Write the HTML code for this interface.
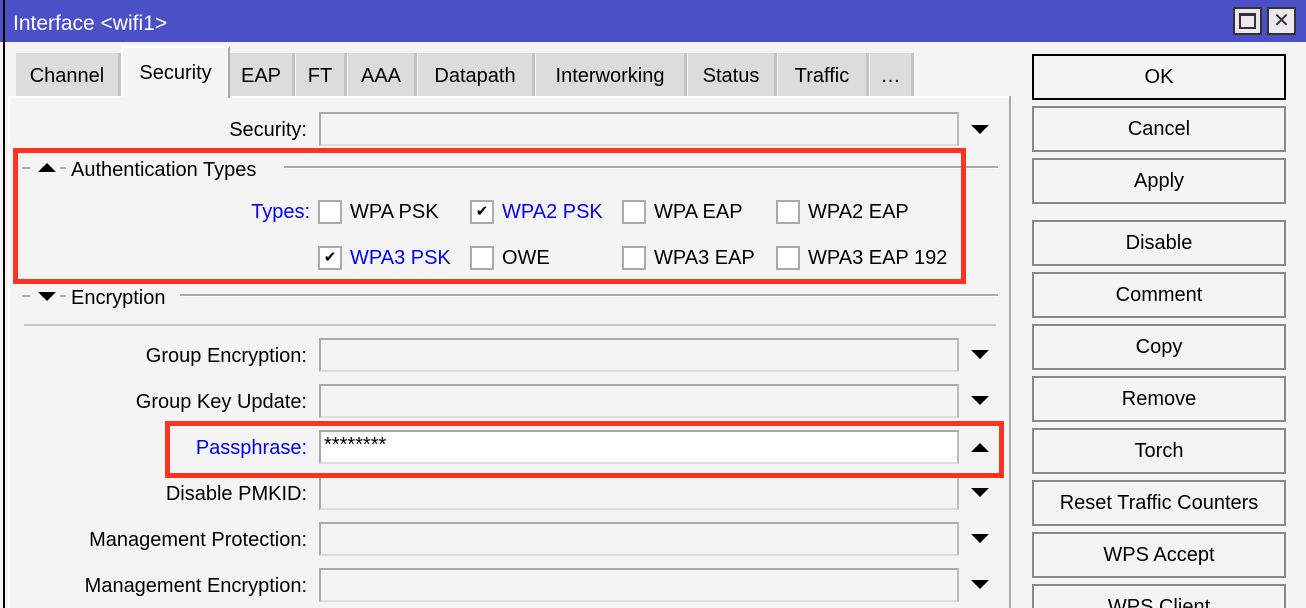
<!DOCTYPE html>
<html style="width:1306px;height:608px;overflow:hidden"><head><style>
*{margin:0;padding:0;box-sizing:border-box}
html,body{width:1306px;height:608px;overflow:hidden}
body{background:#f4f4f4;font-family:"Liberation Sans","DejaVu Sans",sans-serif;font-size:20px;color:#000;position:relative}
.a{position:absolute}
.t{position:absolute;white-space:nowrap;line-height:24px}
.tab{position:absolute;top:53px;height:43px;background:#dcdcdc;border-right:3px solid #c4c4c4;text-align:center;line-height:46px}
.inp{position:absolute;left:319px;width:640px;height:34px;border:2px solid #aaa;border-right-color:#bbb;border-bottom-color:#ddd;background:#f4f4f4}
.lab{position:absolute;right:999px;white-space:nowrap;line-height:24px}
.dn{position:absolute;left:971px;width:0;height:0;border-left:9px solid transparent;border-right:9px solid transparent;border-top:9px solid #000}
.up{position:absolute;left:971px;width:0;height:0;border-left:9px solid transparent;border-right:9px solid transparent;border-bottom:9px solid #000}
.cb{position:absolute;width:24px;height:24px;border:2px solid #aaa;background:#fff}
.ck{font-size:15px;line-height:20px;text-align:center;font-weight:bold}
.btn{position:absolute;left:1032px;width:254px;height:46px;border:2px solid #888;background:#f4f4f4;text-align:center;line-height:42px}
.blue{color:#0000ee}
.red{position:absolute;border:5px solid #ff3322}
</style></head><body>
<div class="a" style="left:0;top:0;width:1306px;height:42px;background:#4b50c6"></div>
<div class="a" style="left:3px;top:0;width:2px;height:608px;background:#000"></div>
<div class="t" style="left:13px;top:12px;color:#fff;font-size:21px">Interface &lt;wifi1&gt;</div>
<div class="a" style="left:1233px;top:7px;width:29px;height:28px;background:#ece8ec;border:2px solid #333"><div class="a" style="left:4px;top:4px;width:17px;height:16px;border:2px solid #333;border-top-width:3px"></div></div>
<div class="a" style="left:1267px;top:7px;width:29px;height:28px;background:#ece8ec;border:2px solid #333;text-align:center;line-height:24px;font-weight:bold;font-size:20px;color:#333">✕</div>

<div class="tab" style="left:16px;width:105px">Channel</div>
<div class="a" style="left:121px;top:46px;width:109px;height:52px;background:#f4f4f4;border-top:2px solid #fff;border-left:2px solid #fff;border-right:2px solid #aaa;text-align:center;line-height:50px">Security</div>
<div class="tab" style="left:230px;width:65px">EAP</div>
<div class="tab" style="left:296px;width:51px">FT</div>
<div class="tab" style="left:348px;width:69px">AAA</div>
<div class="tab" style="left:418px;width:117px">Datapath</div>
<div class="tab" style="left:536px;width:151px">Interworking</div>
<div class="tab" style="left:688px;width:89px">Status</div>
<div class="tab" style="left:778px;width:91px">Traffic</div>
<div class="tab" style="left:870px;width:44px">…</div>
<div class="a" style="left:8px;top:96px;width:113px;height:2px;background:#fff"></div>
<div class="a" style="left:231px;top:96px;width:780px;height:2px;background:#fff"></div>
<div class="a" style="left:8px;top:96px;width:2px;height:512px;background:#fff"></div>
<div class="a" style="left:1009px;top:96px;width:2px;height:512px;background:#aaa"></div>

<div class="lab" style="top:118px">Security:</div>
<div class="inp" style="top:112px"></div><div class="dn" style="top:125px"></div>

<div class="a" style="left:22px;top:167px;width:8px;height:2px;background:#aaa"></div>
<div class="a" style="left:38px;top:163px;border-left:9px solid transparent;border-right:9px solid transparent;border-bottom:9px solid #000"></div>
<div class="a" style="left:60px;top:167px;width:6px;height:2px;background:#aaa"></div>
<div class="t" style="left:71px;top:158px">Authentication Types</div>
<div class="a" style="left:284px;top:166px;width:714px;height:2px;background:#aaa"></div>
<div class="a" style="left:284px;top:168px;width:714px;height:1px;background:#fff"></div>

<div class="t blue" style="right:996px;top:200px">Types:</div>
<div class="cb" style="left:318px;top:200px"></div><div class="t" style="left:350px;top:200px">WPA PSK</div>
<div class="cb ck" style="left:470px;top:200px">✔</div><div class="t blue" style="left:502px;top:200px">WPA2 PSK</div>
<div class="cb" style="left:622px;top:200px"></div><div class="t" style="left:654px;top:200px">WPA EAP</div>
<div class="cb" style="left:776px;top:200px"></div><div class="t" style="left:808px;top:200px">WPA2 EAP</div>
<div class="cb ck" style="left:318px;top:246px">✔</div><div class="t blue" style="left:350px;top:246px">WPA3 PSK</div>
<div class="cb" style="left:470px;top:246px"></div><div class="t" style="left:502px;top:246px">OWE</div>
<div class="cb" style="left:622px;top:246px"></div><div class="t" style="left:654px;top:246px">WPA3 EAP</div>
<div class="cb" style="left:776px;top:246px"></div><div class="t" style="left:808px;top:246px">WPA3 EAP 192</div>
<div class="red" style="left:13px;top:148px;width:953px;height:136px"></div>

<div class="a" style="left:22px;top:295px;width:8px;height:2px;background:#aaa"></div>
<div class="a" style="left:38px;top:292px;border-left:9px solid transparent;border-right:9px solid transparent;border-top:9px solid #000"></div>
<div class="a" style="left:60px;top:295px;width:6px;height:2px;background:#aaa"></div>
<div class="t" style="left:71px;top:286px">Encryption</div>
<div class="a" style="left:180px;top:294px;width:818px;height:2px;background:#aaa"></div>
<div class="a" style="left:180px;top:296px;width:818px;height:1px;background:#fff"></div>
<div class="a" style="left:24px;top:324px;width:972px;height:2px;background:#c4c4c4"></div>

<div class="lab" style="top:344px">Group Encryption:</div><div class="inp" style="top:338px"></div><div class="dn" style="top:350px"></div>
<div class="lab" style="top:390px">Group Key Update:</div><div class="inp" style="top:384px"></div><div class="dn" style="top:396px"></div>
<div class="lab blue" style="top:436px">Passphrase:</div><div class="inp" style="top:430px;background:#fff"></div><div class="t" style="left:324px;top:433px">********</div><div class="up" style="top:443px"></div>
<div class="lab" style="top:482px">Disable PMKID:</div><div class="inp" style="top:476px"></div><div class="dn" style="top:488px"></div>
<div class="lab" style="top:528px">Management Protection:</div><div class="inp" style="top:522px"></div><div class="dn" style="top:534px"></div>
<div class="lab" style="top:574px">Management Encryption:</div><div class="inp" style="top:568px"></div><div class="dn" style="top:580px"></div>
<div class="red" style="left:165px;top:421px;width:839px;height:57px"></div>

<div class="btn" style="top:54px;border:2px solid #000">OK</div>
<div class="btn" style="top:106px">Cancel</div>
<div class="btn" style="top:158px">Apply</div>
<div class="btn" style="top:220px">Disable</div>
<div class="btn" style="top:272px">Comment</div>
<div class="btn" style="top:324px">Copy</div>
<div class="btn" style="top:376px">Remove</div>
<div class="btn" style="top:428px">Torch</div>
<div class="btn" style="top:480px">Reset Traffic Counters</div>
<div class="btn" style="top:532px">WPS Accept</div>
<div class="btn" style="top:584px">WPS Client</div>
</body></html>
